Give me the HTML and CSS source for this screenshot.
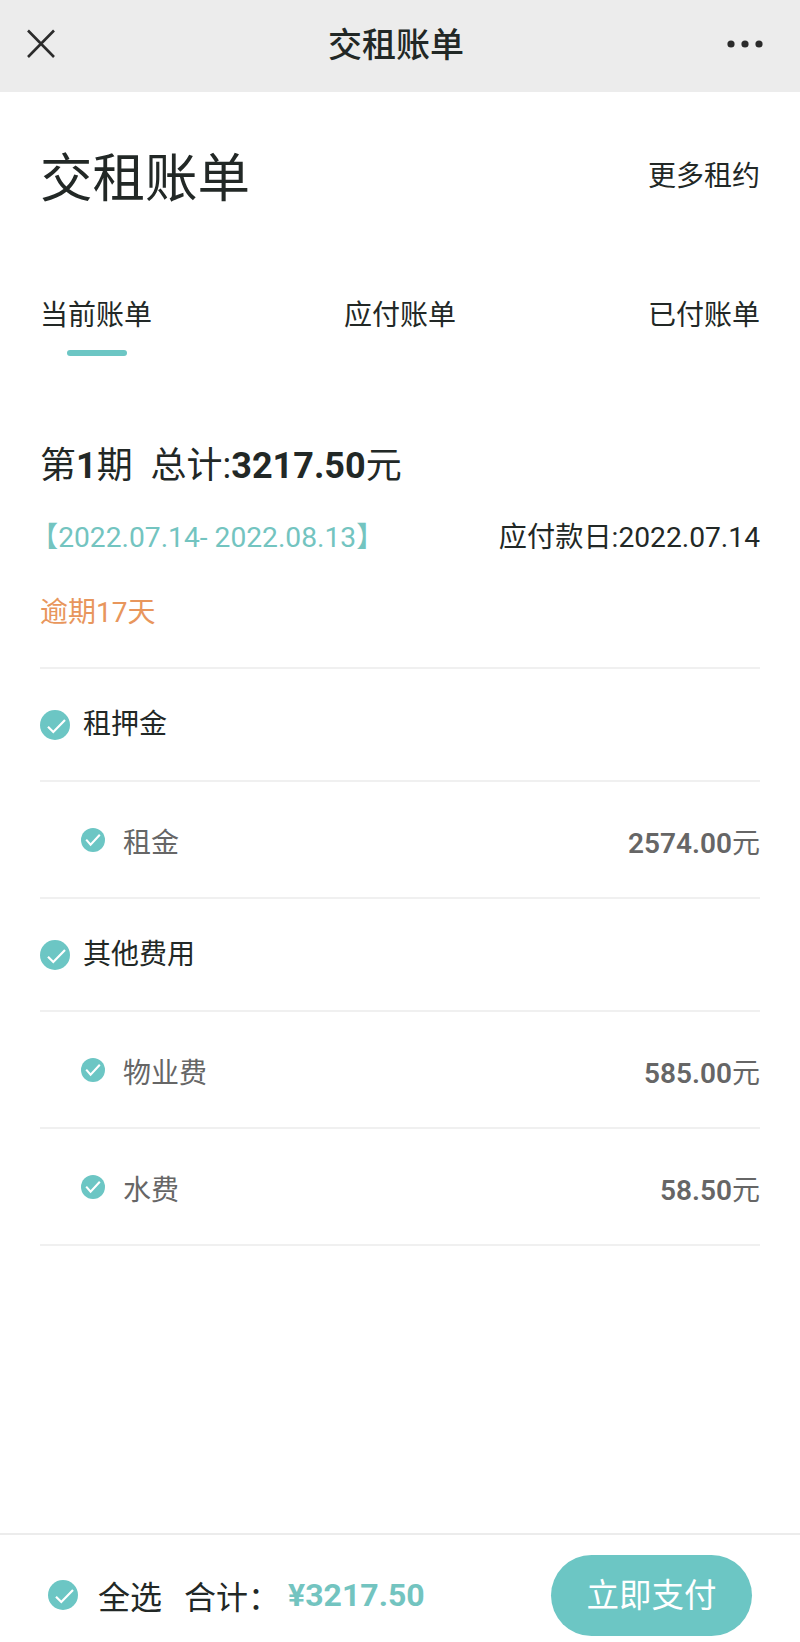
FILE: index.html
```html
<!DOCTYPE html>
<html lang="zh">
<head>
<meta charset="utf-8">
<title>交租账单</title>
<link rel="stylesheet" href="styles.css">
</head>
<body>
<div class="page">
  <header class="nav">
    <svg class="nav-close" viewBox="0 0 30 30" width="30" height="30"><path d="M2 1.5 28 28M28 1.5 2 28" fill="none" stroke="#2b2b2b" stroke-width="2.6"/></svg>
    <div class="nav-title">交租账单</div>
    <svg class="nav-more" viewBox="0 0 36 10" width="36" height="10"><circle cx="4" cy="5" r="3.6" fill="#2b2b2b"/><circle cx="18" cy="5" r="3.6" fill="#2b2b2b"/><circle cx="32" cy="5" r="3.6" fill="#2b2b2b"/></svg>
  </header>

  <main class="content">
    <div class="heading">
      <h1 class="heading-title">交租账单</h1>
      <div class="heading-link">更多租约</div>
    </div>

    <nav class="tabs">
      <div class="tab tab-active">当前账单</div>
      <div class="tab">应付账单</div>
      <div class="tab">已付账单</div>
    </nav>

    <div class="summary">第<b>1</b>期&nbsp; 总计:<b>3217.50</b>元</div>
    <div class="dates">
      <span class="period">【2022.07.14- 2022.08.13】</span>
      <span class="due">应付款日:2022.07.14</span>
    </div>
    <div class="overdue">逾期17天</div>

    <section class="list">
      <div class="row row-group">
        <svg class="check check-lg" viewBox="0 0 30 30"><circle cx="15" cy="15" r="15" fill="#6cc6c4"/><path d="M8 16.7 13.3 22 25 10" fill="none" stroke="#fff" stroke-width="2.2"/></svg>
        <span class="row-name">租押金</span>
      </div>
      <div class="row row-item">
        <svg class="check check-sm" viewBox="0 0 30 30"><circle cx="15" cy="15" r="15" fill="#6cc6c4"/><path d="M6.5 14.6 12 21 23.5 8.5" fill="none" stroke="#fff" stroke-width="2.6"/></svg>
        <span class="row-name">租金</span>
        <span class="row-amount"><b>2574.00</b>元</span>
      </div>
      <div class="row row-group">
        <svg class="check check-lg" viewBox="0 0 30 30"><circle cx="15" cy="15" r="15" fill="#6cc6c4"/><path d="M8 16.7 13.3 22 25 10" fill="none" stroke="#fff" stroke-width="2.2"/></svg>
        <span class="row-name">其他费用</span>
      </div>
      <div class="row row-item">
        <svg class="check check-sm" viewBox="0 0 30 30"><circle cx="15" cy="15" r="15" fill="#6cc6c4"/><path d="M6.5 14.6 12 21 23.5 8.5" fill="none" stroke="#fff" stroke-width="2.6"/></svg>
        <span class="row-name">物业费</span>
        <span class="row-amount"><b>585.00</b>元</span>
      </div>
      <div class="row row-item">
        <svg class="check check-sm" viewBox="0 0 30 30"><circle cx="15" cy="15" r="15" fill="#6cc6c4"/><path d="M6.5 14.6 12 21 23.5 8.5" fill="none" stroke="#fff" stroke-width="2.6"/></svg>
        <span class="row-name">水费</span>
        <span class="row-amount"><b>58.50</b>元</span>
      </div>
    </section>
  </main>

  <footer class="footer">
    <svg class="check check-lg check-all" viewBox="0 0 30 30"><circle cx="15" cy="15" r="15" fill="#6cc6c4"/><path d="M8 16.7 13.3 22 25 10" fill="none" stroke="#fff" stroke-width="2.2"/></svg>
    <span class="all">全选</span>
    <span class="sum-label">合计：</span>
    <span class="sum-value">¥3217.50</span>
    <div class="pay">立即支付</div>
  </footer>
</div>
</body>
</html>
```
FILE: styles.css
```css
* { box-sizing: border-box; }
html, body { margin: 0; padding: 0; background: #fff; }
body {
  font-family: Roboto, "Noto Sans CJK SC", sans-serif;
  color: #222826;
}
.page {
  width: 800px;
  height: 1642px;
  display: flex;
  flex-direction: column;
  overflow: hidden;
}
.nav {
  height: 92px;
  flex: none;
  background: #ececec;
  display: flex;
  align-items: center;
  justify-content: space-between;
  padding: 0 37px 4px 26px;
}
.nav-title { font-size: 34px; font-weight: 500; line-height: 46px; margin: 2px 0 0 9px; }
.nav-close, .nav-more { display: block; }
.content {
  flex: 1;
  padding: 0 40px;
  display: flex;
  flex-direction: column;
}
.heading {
  display: flex;
  justify-content: space-between;
  align-items: center;
  height: 68px;
  margin-top: 53px;
}
.heading-title { margin: 0; font-size: 52.5px; font-weight: 400; line-height: 68px; }
.heading-link { font-size: 28px; line-height: 40px; margin-bottom: 4px; }
.tabs {
  display: flex;
  justify-content: space-between;
  margin-top: 83px;
  height: 74px;
}
.tab { font-size: 28px; line-height: 40px; position: relative; }
.tab-active::after {
  content: "";
  position: absolute;
  left: 27px;
  top: 54px;
  width: 60px;
  height: 6px;
  border-radius: 3px;
  background: #6cc6c4;
}
.summary { margin-top: 73px; font-size: 36px; line-height: 46px; }
.summary b { font-weight: 700; }
.dates {
  display: flex;
  justify-content: space-between;
  margin-top: 29px;
  font-size: 28.2px;
  line-height: 40px;
}
.period { color: #73c4c0; margin-left: -10px; }
.overdue { margin-top: 35px; font-size: 28px; line-height: 40px; color: #e8965c; }
.list { margin-top: 34px; }
.row {
  display: flex;
  align-items: center;
  border-top: 2px solid #f0f0f0;
}
.row-group { height: 113px; }
.row-item { height: 117px; padding-left: 41px; padding-top: 8px; color: #666; }
.list .row:last-child { border-bottom: 2px solid #f0f0f0; height: 119px; }
.check { display: block; flex: none; }
.check-lg { width: 30px; height: 30px; margin-right: 13px; }
.check-sm { width: 24px; height: 24px; margin-right: 18px; margin-top: -8px; }
.row-name { font-size: 28px; line-height: 40px; }
.row-amount { margin-left: auto; font-size: 28px; line-height: 40px; }
.row-amount b { font-weight: 600; }
.footer {
  height: 109px;
  flex: none;
  border-top: 2px solid #ececec;
  display: flex;
  align-items: center;
  padding: 13px 48px 0 48px;
}
.check-all { margin-right: 20px; }
.all { font-size: 32px; margin-right: 22px; }
.sum-label { font-size: 32px; margin-right: 8px; }
.sum-value { font-size: 32px; font-weight: 700; color: #73c4c0; }
.pay {
  margin-left: auto;
  width: 201px;
  height: 81px;
  border-radius: 41px;
  background: #6cc6c4;
  color: #fff;
  font-size: 32.5px;
  padding-bottom: 6px;
  display: flex;
  align-items: center;
  justify-content: center;
}
```
